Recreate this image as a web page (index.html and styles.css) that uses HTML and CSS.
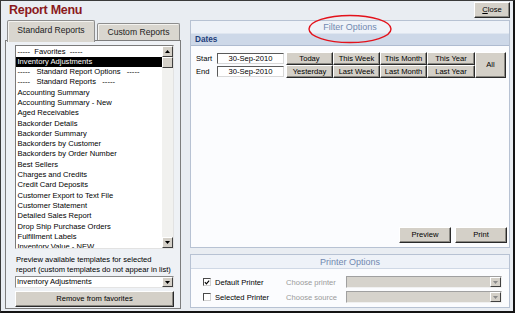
FILE: index.html
```html
<!DOCTYPE html>
<html lang="en">
<head>
  <meta charset="UTF-8">
  <title>Report Menu</title>
  <link rel="stylesheet" href="styles.css">
</head>
<body>
  <div class="window">
    <!-- Title bar -->
    <div class="titlebar">
      <h1>Report Menu</h1>
      <button class="btn close-btn"><u>C</u>lose</button>
    </div>

    <div class="content">
      <!-- Report list with tabs -->
      <div class="left-col">
        <div class="tabs">
          <div class="tab active">Standard Reports</div>
          <div class="tab">Custom Reports</div>
        </div>
        <div class="tab-panel">
          <div class="listbox">
            <ul class="report-list">
              <li>-----  Favorites  -----</li>
              <li class="selected">Inventory Adjustments</li>
              <li>-----   Standard Report Options   -----</li>
              <li>-----   Standard Reports   -----</li>
              <li>Accounting Summary</li>
              <li>Accounting Summary - New</li>
              <li>Aged Receivables</li>
              <li>Backorder Details</li>
              <li>Backorder Summary</li>
              <li>Backorders by Customer</li>
              <li>Backorders by Order Number</li>
              <li>Best Sellers</li>
              <li>Charges and Credits</li>
              <li>Credit Card Deposits</li>
              <li>Customer Export to Text File</li>
              <li>Customer Statement</li>
              <li>Detailed Sales Report</li>
              <li>Drop Ship Purchase Orders</li>
              <li>Fulfillment Labels</li>
              <li>Inventory Value - NEW</li>
            </ul>
            <div class="scrollbar">
              <div class="scroll-btn"><svg width="5" height="3" viewBox="0 0 5 3"><path d="M0 3 L2.5 0 L5 3 Z" fill="#000"/></svg></div>
              <div class="scroll-thumb"></div>
              <div class="scroll-track"></div>
              <div class="scroll-btn"><svg width="5" height="3" viewBox="0 0 5 3"><path d="M0 0 L5 0 L2.5 3 Z" fill="#000"/></svg></div>
            </div>
          </div>
          <p class="hint">Preview available templates for selected<br>report (custom templates do not appear in list)</p>
          <div class="combo">
            <span class="combo-text">Inventory Adjustments</span>
            <span class="combo-arrow"><svg width="5" height="3" viewBox="0 0 5 3"><path d="M0 0 L5 0 L2.5 3 Z" fill="#000"/></svg></span>
          </div>
          <button class="btn wide-btn">Remove from favorites</button>
        </div>
      </div>

      <!-- Filter and printer options -->
      <div class="right-col">
        <section class="group filter-group">
          <div class="group-title">
            Filter Options
            <svg class="highlight-ring" width="86" height="30" viewBox="0 0 86 30">
              <ellipse cx="43" cy="15" rx="41" ry="13.5" fill="none" stroke="#e3121b" stroke-width="1.4"/>
            </svg>
          </div>
          <div class="dates-bar">Dates</div>
          <div class="dates-grid">
            <span class="date-label">Start</span>
            <span class="date-input">30-Sep-2010</span>
            <button class="btn">Today</button>
            <button class="btn">This Week</button>
            <button class="btn">This Month</button>
            <button class="btn">This Year</button>
            <button class="btn all-btn">All</button>
            <span class="date-label">End</span>
            <span class="date-input">30-Sep-2010</span>
            <button class="btn">Yesterday</button>
            <button class="btn">Last Week</button>
            <button class="btn">Last Month</button>
            <button class="btn">Last Year</button>
          </div>
          <div class="actions">
            <button class="btn action-btn">Preview</button>
            <button class="btn action-btn">Print</button>
          </div>
        </section>

        <section class="group printer-group">
          <div class="group-title">Printer Options</div>
          <div class="printer-rows">
            <span class="checkbox"><svg width="7" height="7" viewBox="0 0 7 7"><path d="M1 3.2 L2.8 5.2 L6 1.2" fill="none" stroke="#000" stroke-width="1.3"/></svg></span>
            <span class="printer-label">Default Printer</span>
            <span class="choose-label">Choose printer</span>
            <div class="select disabled"><span class="select-arrow"><svg width="5" height="3" viewBox="0 0 5 3"><path d="M0 0 L5 0 L2.5 3 Z" fill="#8a8a8a"/></svg></span></div>
            <span class="checkbox"></span>
            <span class="printer-label">Selected Printer</span>
            <span class="choose-label">Choose source</span>
            <div class="select disabled"><span class="select-arrow"><svg width="5" height="3" viewBox="0 0 5 3"><path d="M0 0 L5 0 L2.5 3 Z" fill="#8a8a8a"/></svg></span></div>
          </div>
        </section>
      </div>
    </div>
  </div>
</body>
</html>
```

FILE: styles.css
```css
* {
  box-sizing: border-box;
}

body {
  margin: 0;
  font-family: "Liberation Sans", Arial, sans-serif;
  font-size: 7.6px;
  color: #000;
  background: #fff;
}

.window {
  width: 515px;
  height: 313px;
  border-style: solid;
  border-width: 1px 2px 2px 1px;
  border-color: #3a3a3a #141414 #141414 #3a3a3a;
  background: #e9edf2;
  display: flex;
  flex-direction: column;
}

/* Title bar */
.titlebar {
  height: 19px;
  display: flex;
  justify-content: space-between;
  align-items: flex-start;
}

.titlebar h1 {
  margin: 2px 0 0 8px;
  font-size: 12.5px;
  line-height: 14px;
  letter-spacing: -0.3px;
  color: #8b1a1c;
}

.btn {
  font-family: inherit;
  font-size: 7.6px;
  color: #000;
  background: #d4d0c8;
  border: 1px solid;
  border-color: #fff #2a2a2a #2a2a2a #fff;
  box-shadow: inset -1px -1px 0 #8a8882;
  padding: 0;
  line-height: 1;
  cursor: pointer;
}

.close-btn {
  margin: 1px 3px 0 0;
  width: 36px;
  height: 16px;
}

.content {
  flex: 1;
  display: flex;
  gap: 9px;
  padding: 0 3px 2px 4px;
}

/* Left column */
.left-col {
  width: 176px;
  display: flex;
  flex-direction: column;
}

.tabs {
  height: 20px;
  display: flex;
  align-items: flex-end;
  padding-left: 2px;
  gap: 2px;
}

.tab {
  height: 17px;
  width: 83px;
  font-size: 8.6px;
  line-height: 16px;
  text-align: center;
  color: #222;
  background: #d9d6cf;
  border: 1px solid #8e8e8e;
  border-bottom: none;
  border-radius: 2px 2px 0 0;
  box-shadow: inset 1px 1px 0 #f4f3f0;
}

.tab.active {
  height: 22px;
  width: 88px;
  margin-bottom: -2px;
  line-height: 19px;
  position: relative;
  z-index: 1;
}

.tab-panel {
  flex: 1;
  border: 1px solid #7d7d7d;
  background: #eef1f5;
  padding: 4px 6px 0 9px;
}

.listbox {
  height: 204px;
  display: flex;
  background: #fff;
  border: 1px solid;
  border-color: #7a7a7a #e2e2e2 #e2e2e2 #7a7a7a;
}

.report-list {
  flex: 1;
  list-style: none;
  margin: 0;
  padding: 0.5px 0 0;
  overflow: hidden;
}

.report-list li {
  height: 10.3px;
  line-height: 10.3px;
  padding-left: 1.5px;
  white-space: pre;
}

.report-list li.selected {
  background: #000;
  color: #fff;
}

.scrollbar {
  width: 11px;
  display: flex;
  flex-direction: column;
  background: #f1f1ef;
}

.scroll-btn,
.scroll-thumb {
  height: 11px;
  background: #d4d0c8;
  border: 1px solid;
  border-color: #fff #404040 #404040 #fff;
  display: flex;
  align-items: center;
  justify-content: center;
}

.scroll-track {
  flex: 1;
}

.hint {
  margin: 6px 0 1px;
  padding-left: 1px;
  line-height: 10px;
  white-space: nowrap;
}

.combo {
  height: 12px;
  display: flex;
  background: #fff;
  border: 1px solid;
  border-color: #8a8a8a #e4e4e4 #e4e4e4 #8a8a8a;
}

.combo-text {
  flex: 1;
  line-height: 10px;
  padding-left: 1px;
}

.combo-arrow,
.select-arrow {
  width: 11px;
  display: flex;
  align-items: center;
  justify-content: center;
  background: #d4d0c8;
  border: 1px solid;
  border-color: #fff #404040 #404040 #fff;
}

.wide-btn {
  width: 100%;
  height: 16px;
  margin-top: 3px;
}

/* Right column */
.right-col {
  flex: 1;
  display: flex;
  flex-direction: column;
  gap: 6px;
  padding-bottom: 1px;
}

.group {
  border: 1px solid #b7c2d3;
  background: #fbfcfe;
  display: flex;
  flex-direction: column;
}

.filter-group {
  height: 228px;
}

.printer-group {
  flex: 1;
}

.group-title {
  position: relative;
  height: 12px;
  line-height: 12px;
  text-align: center;
  font-size: 9px;
  color: #7189b0;
  background: #eef2f8;
}

.printer-group .group-title {
  height: 14px;
  line-height: 14px;
  border-bottom: 1px solid #cfd8e5;
}

.highlight-ring {
  position: absolute;
  left: 50%;
  top: -7px;
  margin-left: -43px;
}

.dates-bar {
  height: 13px;
  line-height: 12px;
  padding-left: 4px;
  font-size: 8.2px;
  font-weight: bold;
  color: #1e3e7c;
  background: #cdd8e8;
  border-top: 1px solid #dfe6f0;
  border-bottom: 1px solid #aebbd0;
}

.dates-grid {
  margin-top: 6px;
  padding-left: 5px;
  display: grid;
  grid-template-columns: 21px 69px 47px 47px 47px 48px 31px;
  grid-template-rows: 13px 13px;
  align-items: center;
}

.dates-grid .btn {
  height: 13px;
}

.date-input {
  width: 67px;
  height: 11.5px;
  line-height: 10px;
  text-align: center;
  background: #fff;
  border: 1px solid;
  border-color: #5a5a5a #d8d8d8 #d8d8d8 #5a5a5a;
}

.all-btn {
  grid-column: 7;
  grid-row: 1 / span 2;
  height: 26px !important;
}

.actions {
  margin-top: auto;
  display: flex;
  justify-content: flex-end;
  gap: 4px;
  padding: 0 2px 4px 0;
}

.action-btn {
  width: 52px;
  height: 16px;
}

.printer-rows {
  padding: 7px 0 0 12px;
  display: grid;
  grid-template-columns: 12px 71px 60px 156px;
  grid-auto-rows: 12px;
  row-gap: 3px;
  align-items: center;
}

.checkbox {
  width: 8px;
  height: 8px;
  background: #fff;
  border: 1px solid;
  border-color: #4a4a4a #d0d0d0 #d0d0d0 #4a4a4a;
  display: flex;
  align-items: center;
  justify-content: center;
}

.choose-label {
  color: #9a9a9a;
}

.select {
  height: 12px;
  display: flex;
  justify-content: flex-end;
  border: 1px solid;
  border-color: #a0a0a0 #f0f0f0 #f0f0f0 #a0a0a0;
}

.select.disabled {
  background: #d6d3cc;
}
```
